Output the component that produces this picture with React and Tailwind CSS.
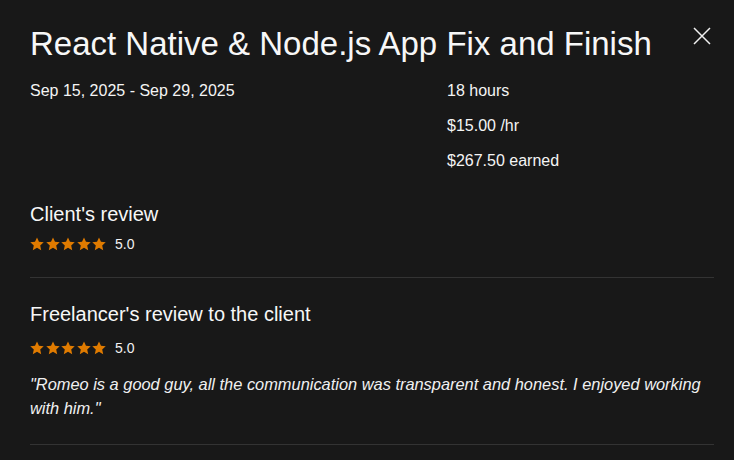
import React from "react";

const Star = () => (
	<svg width="14" height="14" viewBox="0 0 24 24" fill="#e07b00">
		<path d="M12 0.8l3.4 7.4 8.1.9-6 5.5 1.7 8L12 18.5l-7.2 4.1 1.7-8-6-5.5 8.1-.9z" />
	</svg>
);

const Rating = ({ value }) => (
	<div className="flex items-center h-5">
		<div className="flex gap-[1.5px]">
			{[0, 1, 2, 3, 4].map((i) => (
				<Star key={i} />
			))}
		</div>
		<span className="ml-[9px] text-[14px] text-[#f2f2f2]">{value}</span>
	</div>
);

const App = () => {
	return (
		<div
			className="w-[734px] h-[460px] overflow-hidden bg-[#181818] text-white relative"
			style={{ fontFamily: '"Liberation Sans", Arial, sans-serif' }}
		>
			<button className="absolute left-[693px] top-[27px] w-[18px] h-[18px]">
				<svg width="18" height="18" viewBox="0 0 18 18" stroke="#f0f0f0" strokeWidth="1.5">
					<path d="M1 1L17 17M17 1L1 17" />
				</svg>
			</button>
			<div className="pl-[30px] pr-[20px] pt-[24px]">
				<h1 className="text-[33px] leading-[40px] text-[#f7f7f7]">
					React Native &amp; Node.js App Fix and Finish
				</h1>
				<div className="grid grid-cols-[417px_1fr] mt-[15px] text-[16px] leading-6 text-[#f4f4f4]">
					<div>Sep 15, 2025 - Sep 29, 2025</div>
					<div className="flex flex-col gap-[11px]">
						<div>18 hours</div>
						<div>$15.00 /hr</div>
						<div>$267.50 earned</div>
					</div>
				</div>
				<div className="mt-[27px] pb-[23px] border-b border-[#333333]">
					<h2 className="text-[20px] leading-7 text-[#f7f7f7]">Client's review</h2>
					<div className="mt-[6px]">
						<Rating value="5.0" />
					</div>
				</div>
				<div className="pt-[22px] pb-[24px] border-b border-[#333333]">
					<h2 className="text-[20px] leading-7 text-[#f7f7f7]">
						Freelancer's review to the client
					</h2>
					<div className="mt-[10px]">
						<Rating value="5.0" />
					</div>
					<p className="mt-[14px] italic text-[16.4px] leading-6 text-[#f0f0f0]">
						"Romeo is a good guy, all the communication was transparent and honest. I enjoyed working
						with him."
					</p>
				</div>
			</div>
		</div>
	);
};

export default App;
